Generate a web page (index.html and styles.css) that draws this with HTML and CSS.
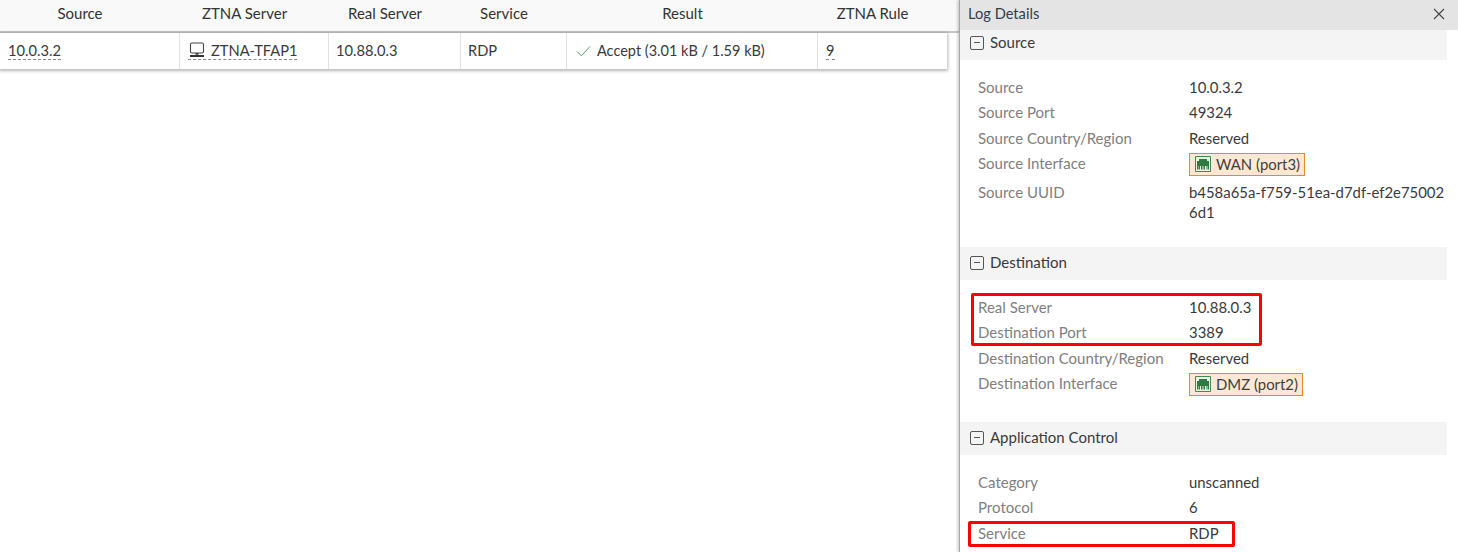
FILE: index.html
```html
<!DOCTYPE html>
<html lang="en">
<head>
<meta charset="utf-8">
<title>Log Details</title>
<link rel="stylesheet" href="styles.css">
</head>
<body>
<div class="page">
  <main class="main">
    <div class="thead">
      <div class="th c1">Source</div>
      <div class="th c2">ZTNA Server</div>
      <div class="th c3">Real Server</div>
      <div class="th c4">Service</div>
      <div class="th c5">Result</div>
      <div class="th c6">ZTNA Rule</div>
    </div>
    <div class="trow">
      <div class="td c1"><span class="dash">10.0.3.2</span></div>
      <div class="td c2"><span class="dash"><svg class="pc" viewBox="0 0 16 16" width="16" height="16"><path d="M3 1h10a1.500 1.500 0 0 1 1.500 1.500v7A1.500 1.500 0 0 1 13 11H3a1.500 1.500 0 0 1-1.500-1.500v-7A1.500 1.500 0 0 1 3 1z" fill="none" stroke="#444" stroke-width="1.100"/><path d="M6.500 11h3v1.800h-3z" fill="#444"/><path d="M1 13h14v2H1z" fill="#333"/></svg>ZTNA-TFAP1</span></div>
      <div class="td c3">10.88.0.3</div>
      <div class="td c4">RDP</div>
      <div class="td c5"><svg class="check" viewBox="0 0 15 12" width="15" height="12"><path d="M1 6.500l4.300 4.300L14 1.500" fill="none" stroke="#4f9f66" stroke-width="1"/></svg>Accept (3.01 kB / 1.59 kB)</div>
      <div class="td c6"><span class="dash">9</span></div>
    </div>
  </main>
  <aside class="panel">
    <header class="phead">
      <span>Log Details</span>
      <svg class="close" viewBox="0 0 12 12" width="12" height="12"><path d="M1 1l10 10M11 1L1 11" stroke="#444" stroke-width="1.100" fill="none"/></svg>
    </header>
    <div class="pbody">
      <section class="sec sec-first">
        <h3 class="sech"><span class="minus"></span>Source</h3>
        <dl class="grid">
          <dt>Source</dt><dd>10.0.3.2</dd>
          <dt>Source Port</dt><dd>49324</dd>
          <dt>Source Country/Region</dt><dd>Reserved</dd>
          <dt class="tagrow">Source Interface</dt><dd class="tagrow"><span class="tag"><svg class="port" viewBox="0 0 16 16" width="16" height="16"><path d="M.5.5h15v15H.5z" fill="#e9f3e6" stroke="#3f8a4f"/><path d="M2 5h2V3h8v2h2v8.500h-1.500V10h-1v3.500H11V10h-1v3.500H8.500V10h-1v3.500H6V10H5v3.500H3.500V10H3v3.500H2z" fill="#2f7a41"/></svg>WAN (port3)</span></dd>
          <dt>Source UUID</dt><dd class="uuid">b458a65a-f759-51ea-d7df-ef2e750026d1</dd>
        </dl>
      </section>
      <section class="sec">
        <h3 class="sech"><span class="minus"></span>Destination</h3>
        <dl class="grid">
          <dt>Real Server</dt><dd>10.88.0.3</dd>
          <dt>Destination Port</dt><dd>3389</dd>
          <dt>Destination Country/Region</dt><dd>Reserved</dd>
          <dt class="tagrow">Destination Interface</dt><dd class="tagrow"><span class="tag"><svg class="port" viewBox="0 0 16 16" width="16" height="16"><path d="M.5.5h15v15H.5z" fill="#e9f3e6" stroke="#3f8a4f"/><path d="M2 5h2V3h8v2h2v8.500h-1.500V10h-1v3.500H11V10h-1v3.500H8.500V10h-1v3.500H6V10H5v3.500H3.500V10H3v3.500H2z" fill="#2f7a41"/></svg>DMZ (port2)</span></dd>
        </dl>
      </section>
      <section class="sec">
        <h3 class="sech"><span class="minus"></span>Application Control</h3>
        <dl class="grid">
          <dt>Category</dt><dd>unscanned</dd>
          <dt>Protocol</dt><dd>6</dd>
          <dt>Service</dt><dd>RDP</dd>
        </dl>
      </section>
    </div>
  </aside>
  <div class="mark mark-a"></div>
  <div class="mark mark-b"></div>
</div>
</body>
</html>
```
FILE: styles.css
```css
* { box-sizing: border-box; }
html, body { margin: 0; height: 100%; overflow: hidden; background: #fff; }
body { font-family: Lato, "Liberation Sans", sans-serif; font-size: 14.67px; color: #3a3a3a; }
.page { position: relative; display: flex; width: 1458px; height: 552px; overflow: hidden; }
.main { width: 959px; flex: none; }
.thead { display: flex; height: 33px; background: #f9f9f9; border-bottom: 2px solid #c6c6c6; line-height: 26px; font-size: 15px; }
.th { text-align: center; padding-right: 20px; color: #333; flex: none; }
.trow { display: flex; width: 947px; height: 36px; background: #fff; box-shadow: 0 1px 3px 1px rgba(0,0,0,.28); line-height: 35px; }
.td { flex: none; padding-left: 8px; border-right: 1px solid #e2e2e2; white-space: nowrap; height: 36px; }
.td.c3, .td.c4 { padding-left: 7px; }
.td.c5 { font-size: 14.5px; }
.td.c6 { border-right: 0; }
.c1 { width: 180px; }
.c2 { width: 149px; }
.c3 { width: 132px; }
.c4 { width: 106px; }
.c5 { width: 251px; }
.c6 { width: 129px; }
.dash { border-bottom: 1px dashed #888; }
.pc { vertical-align: -2px; margin-right: 6px; margin-left: 1px; }
.check { vertical-align: -1px; margin-right: 6px; margin-left: 1px; }
.panel { flex: none; width: 499px; height: 552px; border-left: 1px solid #a8a8a8; box-shadow: -1px 0 3px rgba(0,0,0,.25); background: #fff; position: relative; overflow: hidden; }
.phead { display: flex; justify-content: space-between; align-items: center; height: 30px; background: #e4e4e4; padding: 0 13px 3px 8px; color: #2f3e4e; }
.close { display: block; }
.pbody { height: 522px; overflow: hidden; }
.sec { padding-bottom: 22.9px; }
.sec-first { margin-top: -3px; padding-bottom: 22.67px; }
.sec-first .grid { margin-top: 14.33px; }
.sech { display: flex; align-items: center; width: 487px; height: 33px; margin: 0; padding: 0 0 4px 10px; background: #f4f4f4; font: inherit; font-size: 15px; color: #3a3a3a; }
.minus { position: relative; width: 14px; height: 14px; margin-right: 6px; border: 1px solid #555; border-radius: 2px; top: 1px; }
.minus::after { content: ""; position: absolute; left: 3px; right: 3px; top: 5px; height: 1px; background: #555; }
.grid { display: grid; grid-template-columns: 211px 258px; margin: 14.1px 0 0 18px; font-size: 15px; }
.grid dt, .grid dd { margin: 0; padding: 2.67px 0; line-height: 20px; }
.grid dt { color: #808080; }
.grid dd { color: #3a3a3a; font-size: 14.9px; }
.grid .tagrow { height: 29px; }
.uuid { word-break: break-all; }
.tag { display: inline-flex; align-items: center; height: 23px; padding: 0 5px 0 6px; background: #fce8d4; outline: 1px solid #e58a2e; outline-offset: -1px; color: #3f3f3f; }
.port { margin-right: 5px; }
.mark { position: absolute; border: 3px solid #f00; border-radius: 2px; }
.mark-a { left: 971px; top: 293px; width: 291px; height: 53px; }
.mark-b { left: 968px; top: 521px; width: 267px; height: 26px; }
```
